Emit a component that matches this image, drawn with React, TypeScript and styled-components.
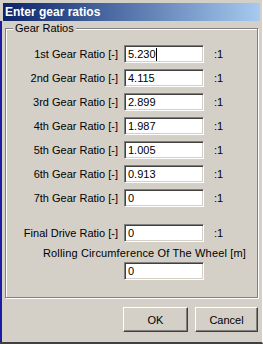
import styled, { createGlobalStyle } from "styled-components";

const GlobalStyle = createGlobalStyle`
  html, body {
    margin: 0;
    padding: 0;
    background: #d4d0c8;
  }
  * {
    box-sizing: border-box;
  }
`;

type Gear = { label: string; value: string; focused?: boolean };

const gears: Gear[] = [
  { label: "1st Gear Ratio [-]", value: "5.230", focused: true },
  { label: "2nd Gear Ratio [-]", value: "4.115" },
  { label: "3rd Gear Ratio [-]", value: "2.899" },
  { label: "4th Gear Ratio [-]", value: "1.987" },
  { label: "5th Gear Ratio [-]", value: "1.005" },
  { label: "6th Gear Ratio [-]", value: "0.913" },
  { label: "7th Gear Ratio [-]", value: "0" },
];

const SWindow = styled.div`
  width: 263px;
  height: 344px;
  background: #d4d0c8;
  display: flex;
  flex-direction: column;
  border-right: 1px solid #fff;
  border-bottom: 2px solid #404040;
  font-family: "Liberation Sans", Arial, sans-serif;
  font-size: 11px;
  color: #000;
`;

const STitleBar = styled.div`
  margin: 3px 2px 0 3px;
  height: 18px;
  padding-left: 2px;
  background: linear-gradient(to right, #0a246a, #a6caf0);
  color: #fff;
  font-weight: bold;
  font-size: 12px;
  line-height: 18px;
`;

const SBody = styled.div`
  flex: 1;
  display: flex;
  flex-direction: column;
  border-left: 2px solid #1c1ca4;
  padding: 7px 3px 0 3px;
`;

const SGroup = styled.div`
  position: relative;
  border: 1px solid #808080;
  box-shadow: inset 1px 1px 0 #fff, 1px 1px 0 #fff;
  margin-right: 1px;
  padding: 16px 0 17px 0;
  display: flex;
  flex-direction: column;
`;

const SLegend = styled.span`
  position: absolute;
  top: -7px;
  left: 7px;
  padding: 0 2px;
  background: #d4d0c8;
  line-height: 13px;
`;

const SRow = styled.div<{ $gapTop?: number }>`
  display: grid;
  grid-template-columns: 112px 80px auto;
  column-gap: 6px;
  align-items: center;
  height: 18px;
  margin-top: ${(p) => p.$gapTop ?? 6}px;
`;

const SLabel = styled.span`
  text-align: right;
  white-space: nowrap;
`;

const STextBox = styled.div`
  height: 18px;
  background: #fff;
  border-top: 1px solid #808080;
  border-left: 1px solid #808080;
  border-right: 1px solid #fff;
  border-bottom: 1px solid #fff;
  box-shadow: inset 1px 1px 0 #404040, inset -1px -1px 0 #d4d0c8;
  padding: 0 3px;
  line-height: 16px;
  display: flex;
  align-items: center;
`;

const SCaret = styled.span`
  display: inline-block;
  width: 1px;
  height: 13px;
  background: #000;
`;

const SUnit = styled.span`
  padding-left: 4px;
`;

const SWheelLabel = styled.div`
  margin-top: 5px;
  padding-left: 37px;
  line-height: 13px;
  letter-spacing: 0.15px;
`;

const SWheelRow = styled.div`
  margin: 2px 0 0 118px;
  width: 80px;
`;

const SButtons = styled.div`
  display: flex;
  justify-content: flex-end;
  gap: 7px;
  padding: 9px 1px 0 0;
`;

const SButton = styled.button<{ $w: number }>`
  width: ${(p) => p.$w}px;
  height: 25px;
  background: #d4d0c8;
  font-family: "Liberation Sans", Arial, sans-serif;
  font-size: 11px;
  color: #000;
  padding: 0;
  border-top: 1px solid #fff;
  border-left: 1px solid #fff;
  border-right: 1px solid #404040;
  border-bottom: 1px solid #404040;
  box-shadow: inset -1px -1px 0 #808080;
`;

export default function App() {
  return (
    <>
      <GlobalStyle />
      <SWindow>
        <STitleBar>Enter gear ratios</STitleBar>
        <SBody>
          <SGroup>
            <SLegend>Gear Ratios</SLegend>
            {gears.map((g, i) => (
              <SRow key={g.label} $gapTop={i === 0 ? 0 : 6}>
                <SLabel>{g.label}</SLabel>
                <STextBox>
                  {g.value}
                  {g.focused && <SCaret />}
                </STextBox>
                <SUnit>:1</SUnit>
              </SRow>
            ))}
            <SRow $gapTop={17}>
              <SLabel>Final Drive Ratio [-]</SLabel>
              <STextBox>0</STextBox>
              <SUnit>:1</SUnit>
            </SRow>
            <SWheelLabel>Rolling Circumference Of The Wheel [m]</SWheelLabel>
            <SWheelRow>
              <STextBox>0</STextBox>
            </SWheelRow>
          </SGroup>
          <SButtons>
            <SButton $w={65}>OK</SButton>
            <SButton $w={63}>Cancel</SButton>
          </SButtons>
        </SBody>
      </SWindow>
    </>
  );
}
